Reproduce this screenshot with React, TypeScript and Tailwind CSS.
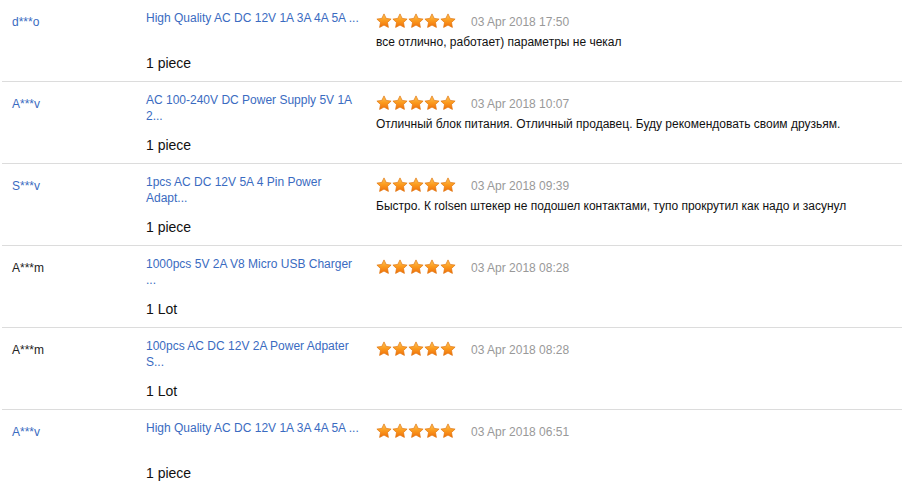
import React from 'react';

interface Review {
  buyer: string;
  buyerLink: boolean;
  product: string;
  quantity: string;
  date: string;
  comment?: string;
}

const reviews: Review[] = [
  {
    buyer: 'd***o',
    buyerLink: true,
    product: 'High Quality AC DC 12V 1A 3A 4A 5A ...',
    quantity: '1 piece',
    date: '03 Apr 2018 17:50',
    comment: 'все отлично, работает) параметры не чекал',
  },
  {
    buyer: 'A***v',
    buyerLink: true,
    product: 'AC 100-240V DC Power Supply 5V 1A 2...',
    quantity: '1 piece',
    date: '03 Apr 2018 10:07',
    comment: 'Отличный блок питания. Отличный продавец. Буду рекомендовать своим друзьям.',
  },
  {
    buyer: 'S***v',
    buyerLink: true,
    product: '1pcs AC DC 12V 5A 4 Pin Power Adapt...',
    quantity: '1 piece',
    date: '03 Apr 2018 09:39',
    comment: 'Быстро. К rolsen штекер не подошел контактами, тупо прокрутил как надо и засунул',
  },
  {
    buyer: 'A***m',
    buyerLink: false,
    product: '1000pcs 5V 2A V8 Micro USB Charger ...',
    quantity: '1 Lot',
    date: '03 Apr 2018 08:28',
  },
  {
    buyer: 'A***m',
    buyerLink: false,
    product: '100pcs AC DC 12V 2A Power Adpater S...',
    quantity: '1 Lot',
    date: '03 Apr 2018 08:28',
  },
  {
    buyer: 'A***v',
    buyerLink: true,
    product: 'High Quality AC DC 12V 1A 3A 4A 5A ...',
    quantity: '1 piece',
    date: '03 Apr 2018 06:51',
  },
];

function Stars({ id }: { id: number }) {
  const star =
    'M8 0.9 L10.2 5.4 L15.1 6.1 L11.5 9.5 L12.4 14.4 L8 12.1 L3.6 14.4 L4.5 9.5 L0.9 6.1 L5.8 5.4 Z';
  return (
    <svg width="80" height="15" viewBox="0 0 80 15" className="mt-[3px] shrink-0">
      <defs>
        <linearGradient id={`sg${id}`} x1="0" y1="0" x2="0" y2="1">
          <stop offset="0" stopColor="#ffc85a" />
          <stop offset="0.5" stopColor="#fb9a1e" />
          <stop offset="1" stopColor="#f0700a" />
        </linearGradient>
      </defs>
      {[0, 1, 2, 3, 4].map(i => (
        <path
          key={i}
          d={star}
          transform={`translate(${i * 16} 0)`}
          fill={`url(#sg${id})`}
          stroke="#e0730c"
          strokeWidth="0.7"
          strokeLinejoin="round"
        />
      ))}
    </svg>
  );
}

export default function App() {
  return (
    <div
      className="min-h-screen bg-white"
      style={{ fontFamily: '"Liberation Sans", Arial, sans-serif' }}
    >
      {reviews.map((r, idx) => (
        <div
          key={idx}
          className="ml-[2px] mr-[1px] flex h-[82px] border-b border-[#dcdcdc] pt-[10px]"
        >
          {/* Buyer */}
          <div
            className={
              r.buyerLink
                ? 'w-[144px] shrink-0 pl-[10px] pt-[4px] text-[12px] leading-4 text-[#3a6bc1]'
                : 'w-[144px] shrink-0 pl-[10px] pt-[4px] text-[12px] leading-4 text-[#222]'
            }
          >
            {r.buyer}
          </div>

          {/* Product */}
          <div className="w-[230px] shrink-0">
            <div className="h-[32px] w-[216px] text-[12px] leading-4 text-[#3a6bc1]">
              {r.product}
            </div>
            <div className="mt-[13px] text-[14px] leading-4 text-[#111]">
              {r.quantity}
            </div>
          </div>

          {/* Feedback */}
          <div className="flex-1">
            <div className="flex items-start">
              <Stars id={idx} />
              <span className="ml-[15px] pt-[4px] text-[12px] leading-4 text-[#999]">
                {r.date}
              </span>
            </div>
            {r.comment && (
              <p className="mt-[4px] text-[12px] leading-4 text-[#111]">
                {r.comment}
              </p>
            )}
          </div>
        </div>
      ))}
    </div>
  );
}
